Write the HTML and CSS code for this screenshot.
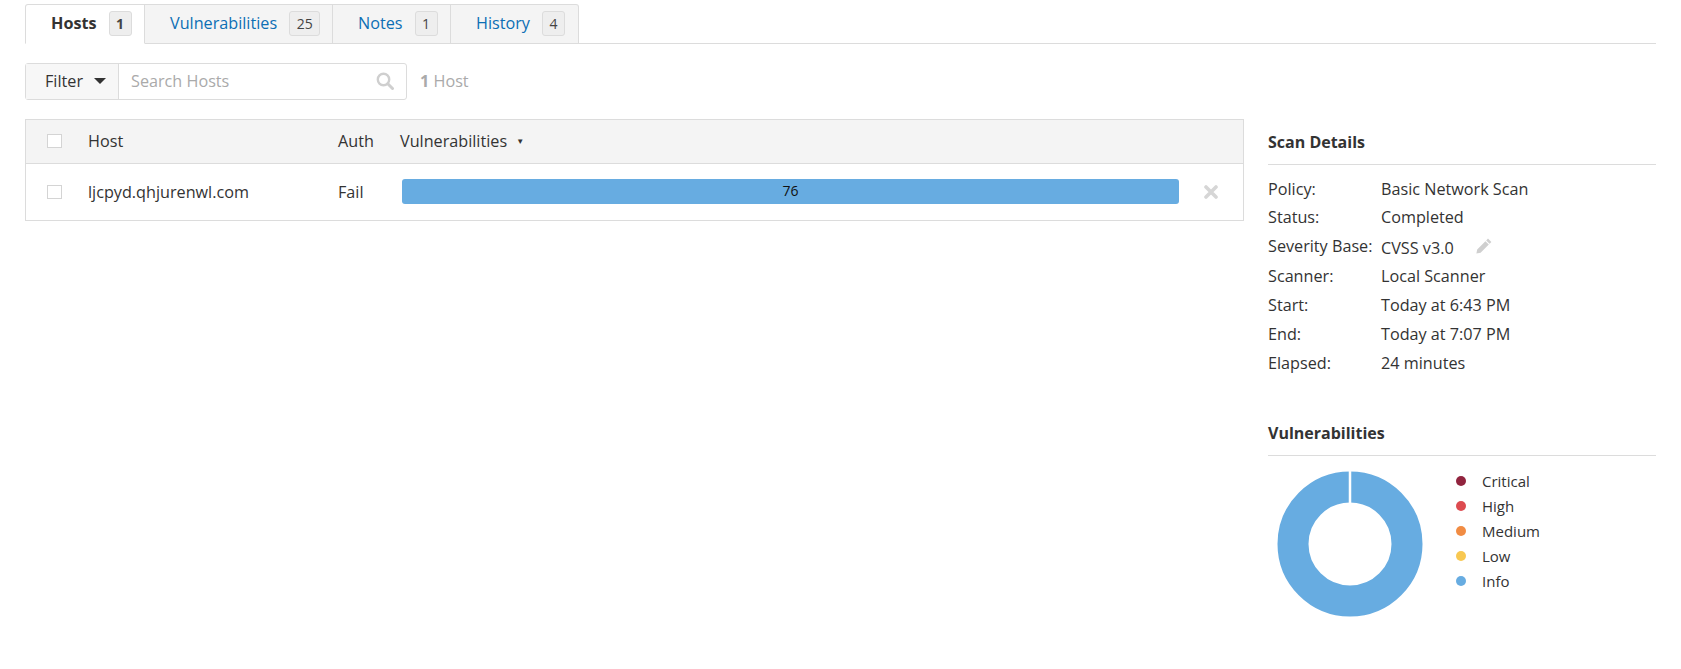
FILE: index.html
```html
<!DOCTYPE html>
<html lang="en">
<head>
<meta charset="utf-8">
<title>Hosts</title>
<link rel="stylesheet" href="styles.css">
</head>
<body>
<nav class="tabs">
  <a class="tab tab-active tab-hosts"><span class="tab-label">Hosts</span><span class="badge">1</span></a>
  <a class="tab tab-vulns"><span class="tab-label">Vulnerabilities</span><span class="badge">25</span></a>
  <a class="tab tab-notes"><span class="tab-label">Notes</span><span class="badge">1</span></a>
  <a class="tab tab-history"><span class="tab-label">History</span><span class="badge">4</span></a>
</nav>
<div class="toolbar">
  <div class="search">
    <div class="filter">Filter<span class="caret"></span></div>
    <div class="search-input">
      <span class="placeholder">Search Hosts</span>
      <svg class="search-icon" viewBox="0 0 18 18" width="18" height="18"><circle cx="7.5" cy="7.5" r="5.7" fill="none" stroke="#cfcfcf" stroke-width="2.4"/><path d="M11.8 11.8L16.5 16.5" stroke="#cfcfcf" stroke-width="3" stroke-linecap="round"/></svg>
    </div>
  </div>
  <div class="count"><b>1</b> Host</div>
</div>
<div class="content">
  <section class="hosts">
    <div class="row row-head">
      <span class="check"></span>
      <span class="col-host">Host</span>
      <span class="col-auth">Auth</span>
      <span class="col-vulns head-vulns">Vulnerabilities<span class="sort">▼</span></span>
    </div>
    <div class="row row-body">
      <span class="check"></span>
      <span class="col-host">ljcpyd.qhjurenwl.com</span>
      <span class="col-auth">Fail</span>
      <span class="col-vulns"><span class="bar">76</span></span>
      <svg class="remove" viewBox="0 0 14 14" width="14" height="14"><path d="M2 2L12 12M12 2L2 12" stroke="#d6d6d6" stroke-width="3.6" stroke-linecap="round"/></svg>
    </div>
  </section>
  <aside class="side">
    <h2 class="side-title">Scan Details</h2>
    <dl class="details">
      <div class="detail"><dt>Policy:</dt><dd>Basic Network Scan</dd></div>
      <div class="detail detail-status"><dt>Status:</dt><dd>Completed</dd></div>
      <div class="detail detail-sev"><dt>Severity Base:</dt><dd class="sev">CVSS v3.0<svg class="pencil" viewBox="0 0 16 16" width="16" height="16"><path d="M12 0.6L15.4 4L13.6 5.8L10.2 2.4Z M9.4 3.2L12.8 6.6L4.6 14.8L0.4 15.6L1.2 11.4Z" fill="#cfcfcf"/></svg></dd></div>
      <div class="detail"><dt>Scanner:</dt><dd>Local Scanner</dd></div>
      <div class="detail"><dt>Start:</dt><dd>Today at 6:43 PM</dd></div>
      <div class="detail"><dt>End:</dt><dd>Today at 7:07 PM</dd></div>
      <div class="detail"><dt>Elapsed:</dt><dd>24 minutes</dd></div>
    </dl>
    <h2 class="side-title side-title-vulns">Vulnerabilities</h2>
    <div class="chart">
      <svg class="donut" viewBox="0 0 146 146" width="146" height="146">
        <circle cx="73" cy="73" r="57" fill="none" stroke="#67ace1" stroke-width="31"/>
        <rect x="71.75" y="0" width="2.5" height="33" fill="#fff"/>
      </svg>
      <ul class="legend">
        <li><span class="dot dot-critical"></span>Critical</li>
        <li><span class="dot dot-high"></span>High</li>
        <li><span class="dot dot-medium"></span>Medium</li>
        <li><span class="dot dot-low"></span>Low</li>
        <li><span class="dot dot-info"></span>Info</li>
      </ul>
    </div>
  </aside>
</div>
</body>
</html>
```
FILE: styles.css
```css
* { box-sizing: border-box; }
html, body { margin: 0; padding: 0; background: #fff; }
body {
  height: 669px;
  overflow: hidden;
  padding: 4px 25px 0;
  font-family: "Open Sans", sans-serif;
  font-size: 16.2px;
  color: #333;
}
.tabs {
  display: flex;
  height: 40px;
  border-bottom: 1px solid #dcdcdc;
}
.tab {
  display: flex;
  align-items: center;
  height: 40px;
  padding-bottom: 2px;
  background: #f4f4f4;
  border: 1px solid #dcdcdc;
  border-left: 0;
  color: #0c6fb5;
}
.tab-hosts { width: 120px; padding-left: 25px; border-left: 1px solid #dcdcdc; border-radius: 3px 0 0 0; }
.tab-vulns { width: 188px; padding-left: 25px; }
.tab-notes { width: 118px; padding-left: 25px; }
.tab-history { width: 128px; padding-left: 25px; border-radius: 0 3px 0 0; }
.tab-active {
  background: #fff;
  border-bottom-color: #fff;
  color: #333;
  font-weight: 700;
}
.tab-label { margin-right: 12px; }
.badge {
  display: flex;
  align-items: center;
  justify-content: center;
  min-width: 22px;
  height: 25px;
  padding: 0 6.5px;
  font-size: 14px;
  color: #444;
  background: #eee;
  border: 1px solid #dcdcdc;
  border-radius: 3px;
}
.toolbar {
  display: flex;
  align-items: center;
  margin-top: 19px;
  height: 37px;
}
.search {
  display: flex;
  width: 382px;
  height: 37px;
  border: 1px solid #dcdcdc;
  border-radius: 3px;
}
.filter {
  display: flex;
  align-items: center;
  width: 93px;
  padding-left: 19px;
  padding-bottom: 2px;
  background: #f7f7f7;
  border-right: 1px solid #dcdcdc;
}
.caret {
  margin-left: 11px;
  margin-top: 1px;
  border-style: solid;
  border-width: 6px 6px 0;
  border-color: #333 transparent transparent;
}
.search-input {
  flex: 1;
  display: flex;
  align-items: center;
  justify-content: space-between;
  padding: 0 12px;
}
.search-icon { margin-top: -2px; }
.placeholder { color: #aaa; margin-top: -2px; }
.count { margin-left: 13px; margin-top: -2px; color: #aaa; }
.content {
  display: flex;
  margin-top: 19px;
}
.hosts {
  width: 1219px;
  height: 102px;
  border: 1px solid #dcdcdc;
}
.row {
  display: flex;
  align-items: center;
  padding-left: 21px;
}
.row-head {
  height: 44px;
  padding-bottom: 2px;
  background: #f4f4f4;
  border-bottom: 1px solid #dcdcdc;
}
.row-body { height: 56px; padding-bottom: 1px; }
.check {
  width: 15px;
  height: 14px;
  background: #fff;
  border: 1px solid #d4d4d4;
}
.col-host { margin-left: 26px; width: 250px; }
.col-auth { width: 62px; }
.col-vulns { display: flex; align-items: center; }
.sort { font-size: 8px; margin-left: 9px; }
.bar {
  display: block;
  width: 777px;
  height: 25px;
  margin-left: 2px;
  text-align: center;
  font-size: 14px;
  line-height: 24px;
  color: #111;
  background: #67ace1;
  border-radius: 3px;
}
.remove { margin-left: 25px; }
.side {
  width: 388px;
  margin-left: 24px;
  padding-top: 13px;
}
.side-title {
  margin: 0;
  padding-bottom: 12px;
  font-size: 16px;
  line-height: 20px;
  font-weight: 700;
  border-bottom: 1px solid #dcdcdc;
}
.details { margin: 9px 0 0; }
.detail {
  display: flex;
  height: 29px;
  align-items: center;
}
.detail-status { height: 28px; }
.detail-sev { height: 30px; }
.detail dt { width: 113px; }
.detail dd { margin: 0; display: flex; align-items: center; }
.sev { padding-top: 3px; }
.pencil { margin-left: 22px; margin-top: -3px; }
.side-title-vulns { margin-top: 46px; }
.chart {
  display: flex;
  margin-top: 15px;
  padding-left: 9px;
}
.legend {
  list-style: none;
  margin: -3px 0 0;
  padding: 0 0 0 33px;
}
.legend li {
  display: flex;
  align-items: center;
  height: 25px;
  font-size: 15px;
}
.dot {
  width: 10px;
  height: 10px;
  margin-right: 16px;
  border-radius: 50%;
}
.dot-critical { background: #91243e; }
.dot-high { background: #dd4b50; }
.dot-medium { background: #f18c43; }
.dot-low { background: #f8c851; }
.dot-info { background: #67ace1; }
```
